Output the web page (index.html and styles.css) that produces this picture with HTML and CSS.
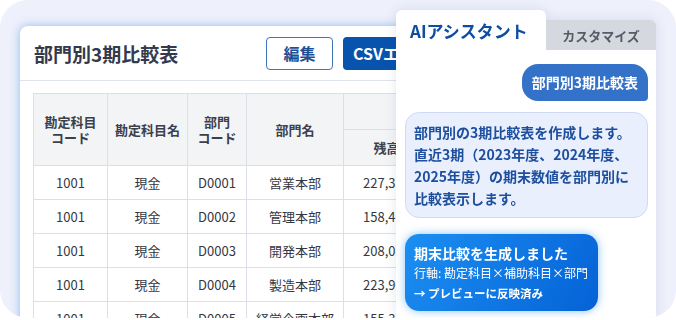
FILE: index.html
```html
<!DOCTYPE html>
<html lang="ja">
<head>
    <meta charset="UTF-8">
    <meta name="viewport" content="width=device-width, initial-scale=1.0">
    <title>部門別3期比較表</title>
    <link rel="stylesheet" href="styles.css">
</head>
<body>
    <div class="stage">
        <div class="sheet">
            <div class="sheet-head">
                <h1 class="sheet-title">部門別3期比較表</h1>
                <button class="btn btn-outline">編集</button>
                <button class="btn btn-solid">CSVエ</button>
            </div>
            <div class="table-wrap">
                <table class="compare">
                    <colgroup>
                        <col style="width: 74px">
                        <col style="width: 80px">
                        <col style="width: 59px">
                        <col style="width: 97px">
                        <col style="width: 86px">
                        <col style="width: 86px">
                        <col style="width: 86px">
                    </colgroup>
                    <thead>
                        <tr>
                            <th rowspan="2">勘定科目<br>コード</th>
                            <th rowspan="2">勘定科目名</th>
                            <th rowspan="2">部門<br>コード</th>
                            <th rowspan="2">部門名</th>
                            <th colspan="3"></th>
                        </tr>
                        <tr>
                            <th>残高</th>
                            <th></th>
                            <th></th>
                        </tr>
                    </thead>
                    <tbody>
                        <tr><td>1001</td><td>現金</td><td>D0001</td><td>営業本部</td><td>227,318</td><td></td><td></td></tr>
                        <tr><td>1001</td><td>現金</td><td>D0002</td><td>管理本部</td><td>158,462</td><td></td><td></td></tr>
                        <tr><td>1001</td><td>現金</td><td>D0003</td><td>開発本部</td><td>208,071</td><td></td><td></td></tr>
                        <tr><td>1001</td><td>現金</td><td>D0004</td><td>製造本部</td><td>223,965</td><td></td><td></td></tr>
                        <tr><td>1001</td><td>現金</td><td>D0005</td><td>経営企画本部</td><td>155,394</td><td></td><td></td></tr>
                    </tbody>
                </table>
            </div>
        </div>

        <!-- チャットパネル（表の上に重なる） -->
        <div class="assistant">
            <div class="tabs">
                <div class="tab tab-active">AIアシスタント</div>
                <div class="tab">カスタマイズ</div>
            </div>
            <div class="chat">
                <div class="bubble-user">部門別3期比較表</div>
                <div class="bubble-ai">
                    部門別の3期比較表を作成します。<br>
                    直近3期（2023年度、2024年度、<br>
                    2025年度）の期末数値を部門別に<br>
                    比較表示します。
                </div>
                <div class="result-card">
                    <div class="result-title">期末比較を生成しました</div>
                    <div class="result-line">行軸: 勘定科目×補助科目×部門</div>
                    <div class="result-note">→ プレビューに反映済み</div>
                </div>
            </div>
        </div>
    </div>
</body>
</html>
```

FILE: styles.css
```css
* {
    box-sizing: border-box;
}

body {
    margin: 0;
    background-color: #fff;
    font-family: "Noto Sans CJK JP", "Noto Sans", sans-serif;
}

.stage {
    position: relative;
    width: 676px;
    height: 318px;
    background-color: #eef0fb;
    border-radius: 28px;
    overflow: hidden;
    padding: 26px 0 0 20px;
}

.sheet {
    width: 440px;
    height: 320px;
    background-color: #fff;
    border-radius: 8px 8px 0 0;
    box-shadow: 0 0 10px rgba(66, 146, 232, 0.55);
    overflow: hidden;
}

.sheet-head {
    display: flex;
    align-items: center;
    height: 55px;
    padding-left: 14px;
    border-bottom: 1px solid #dfe3ea;
}

.sheet-title {
    width: 232px;
    flex: none;
    margin: 0;
    font-size: 19px;
    font-weight: 700;
    color: #333a4b;
    white-space: nowrap;
}

.btn {
    flex: none;
    height: 33px;
    font-family: inherit;
    font-size: 16px;
    font-weight: 700;
    border-radius: 4px;
    white-space: nowrap;
}

.btn-outline {
    width: 67px;
    padding: 0;
    background-color: #fff;
    color: #1c4f94;
    border: 1px solid #3f74bb;
}

.btn-solid {
    width: 80px;
    margin-left: 10px;
    padding: 0 10px;
    background-color: #0753ad;
    color: #fff;
    border: none;
    text-align: left;
}

.table-wrap {
    padding: 12px 0 0 13px;
}

.compare {
    width: 568px;
    table-layout: fixed;
    border-collapse: collapse;
    font-size: 13px;
}

.compare th {
    height: 36px;
    padding: 0;
    background-color: #f3f4f6;
    border: 1px solid #dcdfe5;
    color: #3b404c;
    font-weight: 700;
    line-height: 16px;
    text-align: center;
}

.compare td {
    height: 34px;
    padding: 0;
    border: 1px solid #dcdfe5;
    color: #343843;
    text-align: center;
    white-space: nowrap;
}

/* チャットパネル */
.assistant {
    position: absolute;
    left: 396px;
    top: 10px;
    bottom: 0;
    width: 260px;
    display: flex;
    flex-direction: column;
    filter: drop-shadow(0 0 6px rgba(40, 60, 120, 0.12));
}

.tabs {
    display: flex;
    align-items: flex-end;
    height: 40px;
}

.tab {
    width: 110px;
    height: 30px;
    display: flex;
    align-items: center;
    justify-content: center;
    background-color: #d5d8df;
    border-radius: 0 6px 0 0;
    color: #555a66;
    font-size: 13px;
    font-weight: 700;
}

.tab-active {
    width: 150px;
    height: 40px;
    justify-content: flex-start;
    padding-left: 14px;
    background-color: #fff;
    border-radius: 6px 6px 0 0;
    color: #0d4ea0;
    font-size: 17px;
}

.chat {
    flex: 1;
    display: flex;
    flex-direction: column;
    align-items: flex-start;
    padding: 14px 8px 0 9px;
    background-color: #fff;
}

.bubble-user {
    align-self: flex-end;
    padding: 8px 10px;
    background-color: #3372c8;
    border-radius: 16px 16px 4px 16px;
    color: #fff;
    font-size: 14px;
    font-weight: 700;
    line-height: 21px;
}

.bubble-ai {
    align-self: stretch;
    margin-top: 11px;
    padding: 8px 8px;
    background-color: #e9effd;
    border: 1px solid #cfdbf6;
    border-radius: 14px;
    color: #1d4f9e;
    font-size: 14px;
    font-weight: 700;
    line-height: 22px;
    white-space: nowrap;
}

.result-card {
    width: 193px;
    margin-top: 16px;
    padding: 9px 9px 8px;
    background: linear-gradient(120deg, #1c8ff2, #0562d6);
    border-radius: 14px;
    box-shadow: 0 0 8px rgba(30, 140, 240, 0.5);
    color: #fff;
    white-space: nowrap;
}

.result-title {
    font-size: 14px;
    font-weight: 700;
    line-height: 20px;
}

.result-line {
    font-size: 12px;
    line-height: 20px;
}

.result-note {
    font-size: 11.5px;
    font-weight: 700;
    line-height: 20px;
}
```
